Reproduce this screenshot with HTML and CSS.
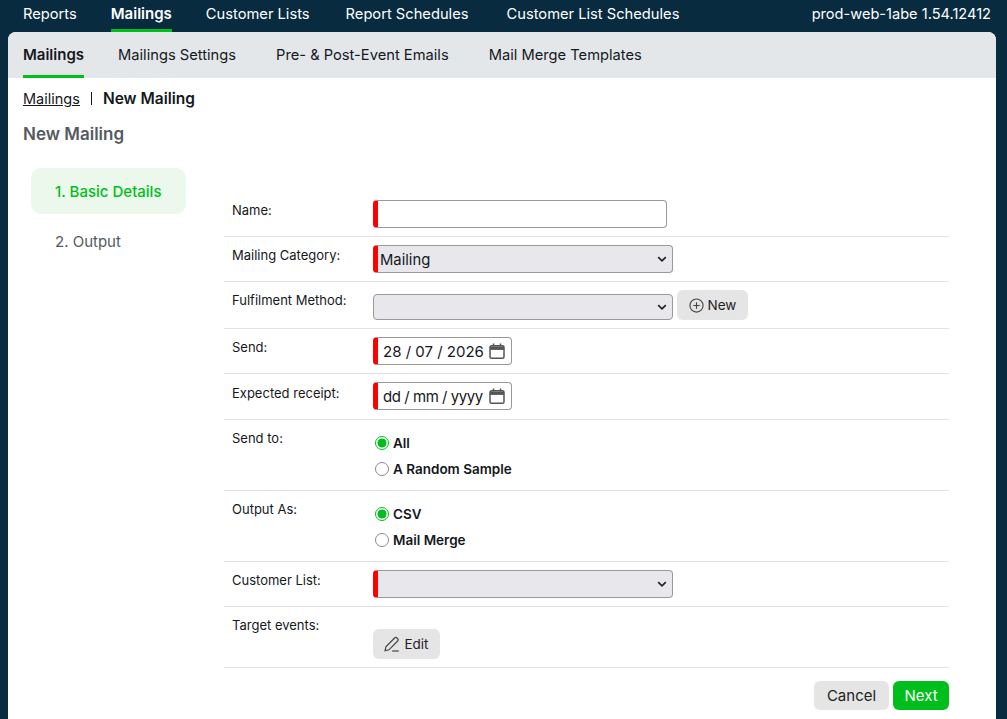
FILE: index.html
```html
<!DOCTYPE html>
<html lang="en">
<head>
    <meta charset="UTF-8">
    <title>New Mailing</title>
    <link rel="stylesheet" href="styles.css">
</head>
<body>
    <div class="topnav">
        <a class="topnav-item">Reports</a>
        <a class="topnav-item active">Mailings</a>
        <a class="topnav-item">Customer Lists</a>
        <a class="topnav-item">Report Schedules</a>
        <a class="topnav-item">Customer List Schedules</a>
        <span class="version">prod-web-1abe 1.54.12412</span>
    </div>

    <div class="panel">
        <div class="tabs">
            <a class="tab active">Mailings</a>
            <a class="tab">Mailings Settings</a>
            <a class="tab">Pre- &amp; Post-Event Emails</a>
            <a class="tab">Mail Merge Templates</a>
        </div>

        <div class="breadcrumb">
            <a class="crumb-link">Mailings</a>
            <span class="crumb-sep"></span>
            <strong>New Mailing</strong>
        </div>
        <h1 class="page-title">New Mailing</h1>

        <div class="wizard">
            <div class="steps">
                <div class="step active">1. Basic Details</div>
                <div class="step">2. Output</div>
            </div>

            <div class="form">
                <div class="row">
                    <label class="row-label">Name:</label>
                    <div class="row-field"><input class="text-input required" type="text"></div>
                </div>
                <div class="row">
                    <label class="row-label">Mailing Category:</label>
                    <div class="row-field">
                        <div class="select-wrap">
                            <select class="select required"><option>Mailing</option></select>
                            <svg class="chevron" width="10" height="6" viewBox="0 0 10 6" fill="none" stroke="#222" stroke-width="1.7"><path d="M1.2 1.2L5 4.8l3.8-3.6"/></svg>
                        </div>
                    </div>
                </div>
                <div class="row row-method">
                    <label class="row-label">Fulfilment Method:</label>
                    <div class="row-field">
                        <div class="select-wrap">
                            <select class="select select-plain"><option></option></select>
                            <svg class="chevron" width="10" height="6" viewBox="0 0 10 6" fill="none" stroke="#222" stroke-width="1.7"><path d="M1.2 1.2L5 4.8l3.8-3.6"/></svg>
                        </div>
                        <button class="btn btn-grey btn-new">
                            <svg width="15" height="15" viewBox="0 0 16 16" fill="none" stroke="#444" stroke-width="1.2"><circle cx="8" cy="8" r="7"/><path d="M8 4.5v7M4.5 8h7"/></svg>
                            New
                        </button>
                    </div>
                </div>
                <div class="row">
                    <label class="row-label">Send:</label>
                    <div class="row-field">
                        <div class="date-input required">
                            <span>28 / 07 / 2026</span>
                            <svg width="16" height="16" viewBox="0 0 16 16" fill="none" stroke="#555" stroke-width="1.5"><rect x="1" y="2.8" width="14" height="12.4" rx="1.5"/><path d="M1 5.2h14" stroke-width="3.4"/><path d="M4.5 .5v3M11.5 .5v3"/></svg>
                        </div>
                    </div>
                </div>
                <div class="row row-receipt">
                    <label class="row-label">Expected receipt:</label>
                    <div class="row-field">
                        <div class="date-input date-empty required">
                            <span>dd / mm / yyyy</span>
                            <svg width="16" height="16" viewBox="0 0 16 16" fill="none" stroke="#555" stroke-width="1.5"><rect x="1" y="2.8" width="14" height="12.4" rx="1.5"/><path d="M1 5.2h14" stroke-width="3.4"/><path d="M4.5 .5v3M11.5 .5v3"/></svg>
                        </div>
                    </div>
                </div>
                <div class="row">
                    <label class="row-label">Send to:</label>
                    <div class="row-field radios">
                        <label class="radio"><input type="radio" name="sendto" checked> All</label>
                        <label class="radio"><input type="radio" name="sendto"> A Random Sample</label>
                    </div>
                </div>
                <div class="row">
                    <label class="row-label">Output As:</label>
                    <div class="row-field radios">
                        <label class="radio"><input type="radio" name="output" checked> CSV</label>
                        <label class="radio"><input type="radio" name="output"> Mail Merge</label>
                    </div>
                </div>
                <div class="row">
                    <label class="row-label">Customer List:</label>
                    <div class="row-field">
                        <div class="select-wrap">
                            <select class="select required"><option></option></select>
                            <svg class="chevron" width="10" height="6" viewBox="0 0 10 6" fill="none" stroke="#222" stroke-width="1.7"><path d="M1.2 1.2L5 4.8l3.8-3.6"/></svg>
                        </div>
                    </div>
                </div>
                <div class="row row-events">
                    <label class="row-label">Target events:</label>
                    <div class="row-field">
                        <button class="btn btn-grey btn-edit">
                            <svg width="16" height="16" viewBox="0 0 16 16" fill="none" stroke="#444" stroke-width="1.2"><path d="M1 14.8l.9-3.9L10.6 2a1.7 1.7 0 0 1 2.4 0l.6.6a1.7 1.7 0 0 1 0 2.4L5 13.8z"/><path d="M8.2 15h6.6"/></svg>
                            Edit
                        </button>
                    </div>
                </div>
                <div class="actions">
                    <button class="btn btn-grey btn-cancel">Cancel</button>
                    <button class="btn btn-next">Next</button>
                </div>
            </div>
        </div>
    </div>
</body>
</html>
```

FILE: styles.css
```css
html, body {
    height: 100%;
}

body {
    margin: 0;
    background: #082b40;
    font-family: 'Inter', 'Liberation Sans', sans-serif;
    color: #15181c;
    overflow: hidden;
}

.topnav {
    display: flex;
    height: 32px;
    padding: 0 16px 0 23px;
    font-size: 14.7px;
    color: #fff;
}

.topnav-item {
    height: 29px;
    line-height: 28px;
    margin-right: 34px;
}

.topnav-item:nth-child(3) {
    margin-right: 36px;
}

.topnav-item:nth-child(4) {
    margin-right: 38px;
}

.topnav-item.active {
    font-size: 15px;
    font-weight: 600;
    border-bottom: 3px solid #00bf1c;
}

.version {
    margin-left: auto;
    font-size: 14.6px;
    line-height: 28px;
}

.panel {
    margin: 0 11px 0 8px;
    height: 687px;
    background: #fff;
    border-radius: 8px 8px 0 0;
    overflow: hidden;
}

.tabs {
    display: flex;
    height: 46px;
    padding-left: 15px;
    background: #e4e7ea;
    font-size: 14.7px;
}

.tab {
    height: 43px;
    line-height: 46px;
    margin-right: 40px;
}

.tab.active {
    margin-right: 34px;
    font-size: 15px;
    font-weight: 600;
    border-bottom: 3px solid #00bf1c;
}

.breadcrumb {
    display: flex;
    align-items: center;
    padding: 10px 15px 0;
    height: 20px;
    font-size: 14.5px;
}

.crumb-link {
    text-decoration: underline;
}

.crumb-sep {
    width: 1px;
    height: 13px;
    margin: 0 11px;
    background: #15181c;
}

.breadcrumb strong {
    font-size: 15.5px;
    font-weight: 600;
}

.page-title {
    margin: 14px 15px 0;
    font-size: 17px;
    line-height: 24px;
    font-weight: 600;
    color: #555a60;
}

.wizard {
    display: flex;
    margin-top: 22px;
}

.steps {
    width: 155px;
    margin-left: 23px;
    font-size: 15px;
}

.step {
    height: 46px;
    line-height: 47px;
    padding-left: 24px;
    margin-bottom: 4px;
    border-radius: 10px;
    color: #555a60;
}

.step.active {
    background: #ecf8eb;
    color: #00bf1c;
    font-weight: 500;
}

.form {
    width: 725px;
    margin: 24px 0 0 38px;
}

.row {
    display: flex;
    padding: 8px 0;
    border-bottom: 1px solid #e2e2e2;
}

.row-receipt {
    padding-bottom: 9px;
}

.row-receipt .row-label {
    padding-top: 1px;
}

.row-label {
    width: 149px;
    padding-left: 8px;
    box-sizing: border-box;
    font-size: 13px;
    line-height: 21px;
}

.row-field {
    display: flex;
    align-items: center;
}

.row-method .row-field {
    align-items: flex-end;
}

.row-events .row-field {
    padding-top: 14px;
}

.required {
    border-left: 5px solid #f00 !important;
}

.text-input {
    width: 294px;
    height: 28px;
    box-sizing: border-box;
    border: 1px solid #999;
    border-radius: 4px;
    outline: none;
}

.select-wrap {
    position: relative;
    display: flex;
}

.select {
    appearance: none;
    width: 300px;
    height: 28px;
    box-sizing: border-box;
    padding: 1px 20px 0 2px;
    border: 1px solid #999;
    border-radius: 4px;
    background-color: #e8e8ec;
    font-family: inherit;
    font-size: 14.8px;
    color: #15181c;
}

.select-plain {
    height: 26px;
}

.chevron {
    position: absolute;
    top: 50%;
    right: 6px;
    margin-top: -3px;
}

.date-input {
    display: flex;
    align-items: center;
    justify-content: space-between;
    width: 139px;
    height: 28px;
    box-sizing: border-box;
    padding: 0 6px 0 5px;
    border: 1px solid #999;
    border-radius: 4px;
    font-size: 15px;
    white-space: nowrap;
}

.date-input svg {
    flex: none;
}

.date-empty span {
    letter-spacing: -0.45px;
}

.radios {
    display: block;
    padding-top: 2px;
}

.radio {
    display: flex;
    align-items: center;
    height: 26px;
    font-size: 13.5px;
    font-weight: 600;
}

.radio input {
    appearance: none;
    width: 14px;
    height: 14px;
    box-sizing: border-box;
    margin: 0 4px 0 2px;
    border: 1px solid #8a8a90;
    border-radius: 50%;
    background: #fff;
}

.radio input:checked {
    border: 1.5px solid #00bf1c;
    background: radial-gradient(circle, #00bf1c 0, #00bf1c 4.2px, #fff 4.8px);
}

.btn {
    display: inline-flex;
    align-items: center;
    justify-content: center;
    height: 30px;
    box-sizing: border-box;
    padding: 0;
    border: none;
    border-radius: 6px;
    font-family: inherit;
    font-size: 13.5px;
    color: #222;
}

.btn-grey {
    background: #e5e5e5;
}

.btn-new {
    gap: 4px;
    width: 71px;
    margin-left: 4px;
}

.btn-edit {
    gap: 4px;
    width: 67px;
}

.actions {
    display: flex;
    justify-content: flex-end;
    gap: 4px;
    padding-top: 13px;
}

.actions .btn {
    height: 29px;
    font-size: 15px;
}

.btn-cancel {
    width: 75px;
}

.actions .btn-next {
    width: 56px;
    background: #00bf1c;
    color: #fff;
}
```
